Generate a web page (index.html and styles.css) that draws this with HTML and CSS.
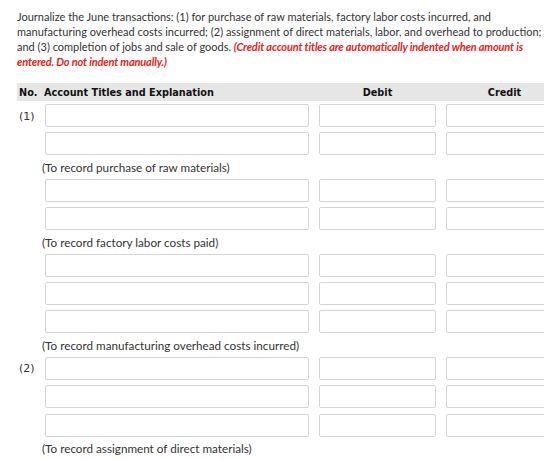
FILE: index.html
```html
<!DOCTYPE html>
<html lang="en">
<head>
    <meta charset="UTF-8">
    <title>Journal Entries</title>
    <link rel="stylesheet" href="styles.css">
</head>
<body>
    <div class="page">
        <p class="question">
            Journalize the June transactions: (1) for purchase of raw materials, factory labor costs incurred, and manufacturing overhead costs incurred; (2) assignment of direct materials, labor, and overhead to production; and (3) completion of jobs and sale of goods.
            <em class="note">(Credit account titles are automatically indented when amount is entered. Do not indent manually.)</em>
        </p>

        <table class="journal">
            <colgroup>
                <col class="col-no">
                <col class="col-title">
                <col class="col-debit">
                <col class="col-credit">
            </colgroup>
            <thead>
                <tr>
                    <th class="left">No.</th>
                    <th class="left title-head">Account Titles and Explanation</th>
                    <th>Debit</th>
                    <th>Credit</th>
                </tr>
            </thead>
            <tbody>
                <tr class="entry">
                    <td class="no">(1)</td>
                    <td class="title"><input type="text"></td>
                    <td class="amt"><input type="text"></td>
                    <td class="amt"><input type="text"></td>
                </tr>
                <tr class="entry">
                    <td></td>
                    <td class="title"><input type="text"></td>
                    <td class="amt"><input type="text"></td>
                    <td class="amt"><input type="text"></td>
                </tr>
                <tr class="explain">
                    <td></td>
                    <td colspan="3">(To record purchase of raw materials)</td>
                </tr>

                <tr class="entry">
                    <td></td>
                    <td class="title"><input type="text"></td>
                    <td class="amt"><input type="text"></td>
                    <td class="amt"><input type="text"></td>
                </tr>
                <tr class="entry">
                    <td></td>
                    <td class="title"><input type="text"></td>
                    <td class="amt"><input type="text"></td>
                    <td class="amt"><input type="text"></td>
                </tr>
                <tr class="explain">
                    <td></td>
                    <td colspan="3">(To record factory labor costs paid)</td>
                </tr>

                <tr class="entry">
                    <td></td>
                    <td class="title"><input type="text"></td>
                    <td class="amt"><input type="text"></td>
                    <td class="amt"><input type="text"></td>
                </tr>
                <tr class="entry">
                    <td></td>
                    <td class="title"><input type="text"></td>
                    <td class="amt"><input type="text"></td>
                    <td class="amt"><input type="text"></td>
                </tr>
                <tr class="entry">
                    <td></td>
                    <td class="title"><input type="text"></td>
                    <td class="amt"><input type="text"></td>
                    <td class="amt"><input type="text"></td>
                </tr>
                <tr class="explain">
                    <td></td>
                    <td colspan="3">(To record manufacturing overhead costs incurred)</td>
                </tr>

                <tr class="entry">
                    <td class="no">(2)</td>
                    <td class="title"><input type="text"></td>
                    <td class="amt"><input type="text"></td>
                    <td class="amt"><input type="text"></td>
                </tr>
                <tr class="entry">
                    <td></td>
                    <td class="title"><input type="text"></td>
                    <td class="amt"><input type="text"></td>
                    <td class="amt"><input type="text"></td>
                </tr>
                <tr class="entry">
                    <td></td>
                    <td class="title"><input type="text"></td>
                    <td class="amt"><input type="text"></td>
                    <td class="amt"><input type="text"></td>
                </tr>
                <tr class="explain">
                    <td></td>
                    <td colspan="3">(To record assignment of direct materials)</td>
                </tr>
            </tbody>
        </table>
    </div>
</body>
</html>
```

FILE: styles.css
```css
body {
    margin: 0;
    background: white;
    font-family: Lato, 'Open Sans', sans-serif;
    color: #333;
}
.page {
    width: 527px;
    padding: 9px 0 0 17px;
    overflow: hidden;
}
.question {
    margin: 0 0 14px 0;
    font-size: 11px;
    line-height: 15px;
    width: 527px;
}
.note {
    color: #e6221c;
    font-weight: bold;
    font-style: italic;
    letter-spacing: -0.15px;
}
.journal {
    border-collapse: collapse;
    table-layout: fixed;
    width: 549px;
}
.col-no { width: 25px; }
.col-title { width: 270px; }
.col-debit { width: 127px; }
.col-credit { width: 127px; }

.journal th {
    background: #e6e6e6;
    height: 18px;
    padding: 0 0 0 4px;
    font-family: 'DejaVu Sans Condensed', 'DejaVu Sans', sans-serif;
    font-size: 10.8px;
    font-weight: bold;
    color: #111;
    text-align: center;
}
.journal th.left {
    text-align: left;
    padding-left: 2px;
}
.entry td {
    padding: 3px 0 2.4px 0;
}
.entry td.title {
    padding-left: 3px;
    padding-right: 3px;
}
.entry td.amt {
    padding-left: 7px;
    padding-right: 3px;
}
.no {
    font-family: 'DejaVu Sans', sans-serif;
    font-size: 11px;
    color: #333;
    padding-left: 2px !important;
    padding-top: 4px !important;
    vertical-align: middle;
}
input {
    display: block;
    box-sizing: border-box;
    width: 100%;
    height: 23px;
    margin: 0;
    border: 1px solid #d5d5d5;
    border-radius: 2px;
    background: white;
}
.explain td {
    height: 18px;
    padding: 0;
    font-size: 11.7px;
    color: #333;
    vertical-align: middle;
}
```
